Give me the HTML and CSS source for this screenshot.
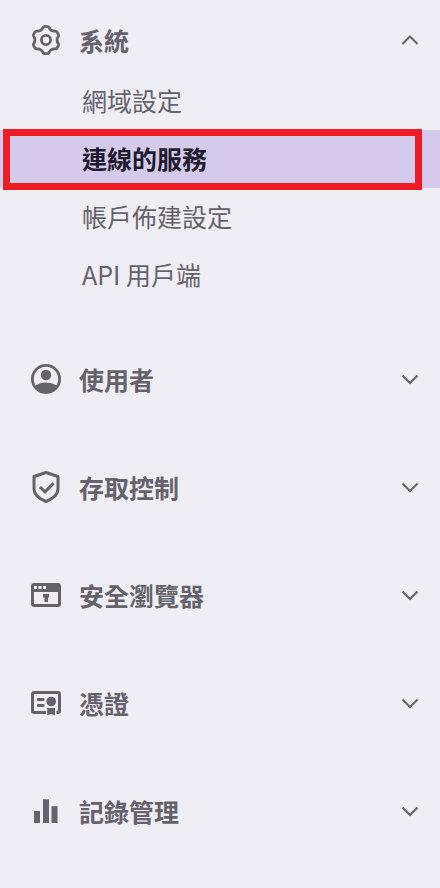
FILE: index.html
```html
<!DOCTYPE html>
<html lang="zh-Hant">
<head>
<meta charset="utf-8">
<meta name="viewport" content="width=device-width, initial-scale=1">
<title>系統</title>
<link rel="stylesheet" href="styles.css">
</head>
<body>
<nav class="menu">
  <section class="group">
    <button class="heading" type="button" aria-expanded="true">
      <svg class="icon" viewBox="0 0 36 36" fill="none" stroke="currentColor" stroke-width="2.8" stroke-linejoin="round"><path d="M30.6 14C28.6 16.6 28.6 19.4 30.6 22C31.2 22.9 28.8 27 27.8 26.9C24.5 26.5 22.1 27.9 20.8 30.9C20.4 31.9 15.6 31.9 15.2 30.9C13.9 27.9 11.5 26.5 8.2 26.9C7.2 27 4.8 22.9 5.4 22C7.4 19.4 7.4 16.6 5.4 14C4.8 13.1 7.2 9 8.2 9.1C11.5 9.5 13.9 8.1 15.2 5.1C15.6 4.1 20.4 4.1 20.8 5.1C22.1 8.1 24.5 9.5 27.8 9.1C28.8 9 31.2 13.1 30.6 14Z"/><circle cx="18" cy="18" r="4.6"/></svg>
      <span class="label">系統</span>
      <svg class="chevron" viewBox="0 0 18 18"><path d="M1.5 13L9 5.500L16.5 13"/></svg>
    </button>
    <ul class="submenu">
      <li><a class="item" href="#domain">網域設定</a></li>
      <li><a class="item item-current" href="#services" aria-current="page">連線的服務</a></li>
      <li><a class="item" href="#provisioning">帳戶佈建設定</a></li>
      <li><a class="item" href="#api">API 用戶端</a></li>
    </ul>
  </section>
  <section class="group">
    <button class="heading" type="button" aria-expanded="false">
      <svg class="icon" viewBox="0 0 36 36"><circle cx="18" cy="18" r="13.6" fill="none" stroke="currentColor" stroke-width="2.8"/><circle cx="18" cy="14" r="5.2" fill="currentColor"/><path d="M6.500 25.500Q11 21.500 18 21.500T29.500 25.500Q25.500 32 18 32T6.500 25.500Z" fill="currentColor"/></svg>
      <span class="label">使用者</span>
      <svg class="chevron" viewBox="0 0 18 18"><path d="M1.5 5.5L9 13L16.5 5.5"/></svg>
    </button>
  </section>
  <section class="group">
    <button class="heading" type="button" aria-expanded="false">
      <svg class="icon" viewBox="0 0 36 36" fill="none" stroke="currentColor" stroke-width="3"><path d="M18 3.500L30 7.500V20Q30 27.500 18 32.500Q6 27.500 6 20V7.500Z" stroke-linejoin="round"/><path d="M12 18L17 22.800L25.500 14.300"/></svg>
      <span class="label">存取控制</span>
      <svg class="chevron" viewBox="0 0 18 18"><path d="M1.5 5.5L9 13L16.5 5.5"/></svg>
    </button>
  </section>
  <section class="group">
    <button class="heading" type="button" aria-expanded="false">
      <svg class="icon" viewBox="0 0 36 36" fill="currentColor"><path fill-rule="evenodd" d="M6 6H30Q33 6 33 9V27Q33 30 30 30H6Q3 30 3 27V9Q3 6 6 6ZM6 15V27H30V15ZM6 9V12H9V9ZM10.500 9V12H13.500V9ZM15 9V12H18V9Z"/><path d="M15 17H21V20.500H20V25H16.500V20.500H15Z"/></svg>
      <span class="label">安全瀏覽器</span>
      <svg class="chevron" viewBox="0 0 18 18"><path d="M1.5 5.5L9 13L16.5 5.5"/></svg>
    </button>
  </section>
  <section class="group">
    <button class="heading" type="button" aria-expanded="false">
      <svg class="icon" viewBox="0 0 36 36" fill="currentColor"><path d="M6 6H30Q33 6 33 9V26Q33 29 30 29H28.500V26H30V9H6V26H18V29H6Q3 29 3 26V9Q3 6 6 6Z"/><rect x="9" y="13" width="7.5" height="3" rx="1"/><rect x="9" y="19" width="7.5" height="3" rx="1"/><circle cx="23.2" cy="16.5" r="4.8"/><path d="M19.200 23H27V30.500L23.100 28.800L19.200 30.500Z"/></svg>
      <span class="label">憑證</span>
      <svg class="chevron" viewBox="0 0 18 18"><path d="M1.5 5.5L9 13L16.5 5.5"/></svg>
    </button>
  </section>
  <section class="group">
    <button class="heading" type="button" aria-expanded="false">
      <svg class="icon" viewBox="0 0 36 36" fill="currentColor"><path d="M6 18H12V30H6ZM15 6.300H21V30H15ZM23.500 13.300H29.500V30H23.500Z"/></svg>
      <span class="label">記錄管理</span>
      <svg class="chevron" viewBox="0 0 18 18"><path d="M1.5 5.5L9 13L16.5 5.5"/></svg>
    </button>
  </section>
</nav>
</body>
</html>
```

FILE: styles.css
```css
* {
  box-sizing: border-box;
}

body {
  margin: 0;
  background: #efeef4;
  color: #65626d;
  font-family: "Noto Sans CJK TC", "Noto Sans", sans-serif;
  font-size: 25px;
  line-height: 36px;
}

.menu {
  padding-top: 8px;
}

.heading {
  display: flex;
  align-items: center;
  gap: 15px;
  width: 100%;
  height: 64px;
  margin: 0 0 44px;
  padding: 0 21px 0 28px;
  border: 0;
  background: none;
  color: inherit;
  font: inherit;
  font-weight: 700;
  text-align: left;
  cursor: pointer;
}

.heading[aria-expanded="true"] {
  margin-bottom: 0;
}

.icon {
  flex: none;
  width: 36px;
  height: 36px;
}

.label {
  flex: 1;
}

.chevron {
  flex: none;
  width: 18px;
  height: 18px;
  fill: none;
  stroke: currentColor;
  stroke-width: 2;
}

.submenu {
  margin: 0 0 43px;
  padding: 0;
  list-style: none;
}

.item {
  display: flex;
  align-items: center;
  position: relative;
  height: 58px;
  padding: 0 22px 2px 82px;
  color: inherit;
  text-decoration: none;
}

.item-current {
  background: #d5caec;
  color: #1f1a2e;
  font-weight: 700;
}

/* Highlight frame over the current item */
.item-current::after {
  content: "";
  position: absolute;
  inset: -1px 18px -2px 3px;
  border: 7px solid #ee1c25;
}
```
